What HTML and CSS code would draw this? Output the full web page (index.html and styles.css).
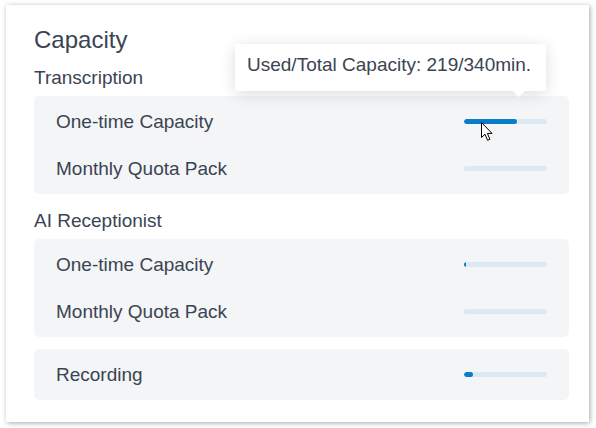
FILE: index.html
```html
<!DOCTYPE html>
<html lang="en">
<head>
  <meta charset="UTF-8">
  <title>Capacity</title>
  <meta name="viewport" content="width=device-width, initial-scale=1.0">
  <link rel="stylesheet" href="styles.css">
</head>
<body>
  <div class="card">
    <h2 class="title">Capacity</h2>

    <div class="group-label">Transcription</div>
    <div class="group">
      <div class="row">
        <span>One-time Capacity</span>
        <div class="bar"><div class="fill" style="width: 64.4%"></div></div>
      </div>
      <div class="row">
        <span>Monthly Quota Pack</span>
        <div class="bar"><div class="fill" style="width: 0%"></div></div>
      </div>
    </div>

    <div class="group-label spaced">AI Receptionist</div>
    <div class="group">
      <div class="row">
        <span>One-time Capacity</span>
        <div class="bar"><div class="fill" style="width: 3%"></div></div>
      </div>
      <div class="row">
        <span>Monthly Quota Pack</span>
        <div class="bar"><div class="fill" style="width: 0%"></div></div>
      </div>
    </div>

    <div class="group single">
      <div class="row">
        <span>Recording</span>
        <div class="bar"><div class="fill" style="width: 11%"></div></div>
      </div>
    </div>

    <!-- hover tooltip for the first bar -->
    <div class="tooltip">Used/Total Capacity: 219/340min.</div>

    <svg class="cursor" width="13" height="20" viewBox="0 0 13 20">
      <path d="M0.5 0.5 L0.5 15.5 L4 12.2 L6.6 18.3 L8.9 17.3 L6.4 11.4 L11 11.4 Z"
            fill="#fff" stroke="#000" stroke-width="1" stroke-linejoin="miter"/>
    </svg>
  </div>
</body>
</html>
```

FILE: styles.css
```css
body {
  margin: 0;
  padding: 5px 7px 6px 6px;
  background: #fff;
  font-family: "Liberation Sans", Arial, sans-serif;
  color: #3b4453;
}
.card {
  position: relative;
  height: 417px;
  box-sizing: border-box;
  padding: 21px 20px 0 28px;
  background: #fff;
  box-shadow: 1px 1px 5px rgba(0, 0, 0, 0.35);
}
.title {
  margin: 0;
  font-size: 24px;
  font-weight: normal;
  line-height: 28px;
}
.group-label {
  margin: 11px 0 6px;
  font-size: 19px;
  line-height: 25px;
}
.group-label.spaced {
  margin-top: 14px;
}
.group {
  padding: 2px 22px;
  background: #f3f5f7;
  border-radius: 5px;
}
.group.single {
  margin-top: 12px;
}
.row {
  display: flex;
  align-items: center;
  justify-content: space-between;
  height: 47px;
  font-size: 19px;
}
.bar {
  width: 83px;
  height: 5px;
  border-radius: 3px;
  background: #dbe9f4;
  overflow: hidden;
}
.fill {
  height: 100%;
  border-radius: 3px;
  background: #0a7dc9;
}
.tooltip {
  position: absolute;
  left: 229px;
  top: 39px;
  width: 311px;
  box-sizing: border-box;
  padding: 9px 12px 14px;
  font-size: 19px;
  line-height: 24px;
  background: #fff;
  border-radius: 3px;
  box-shadow: 0 3px 16px rgba(0, 0, 0, 0.14);
}
.tooltip::after {
  content: "";
  position: absolute;
  left: 278px;
  bottom: -6px;
  border-left: 6px solid transparent;
  border-right: 6px solid transparent;
  border-top: 6px solid #fff;
}
.cursor {
  position: absolute;
  left: 475px;
  top: 117px;
}
```
